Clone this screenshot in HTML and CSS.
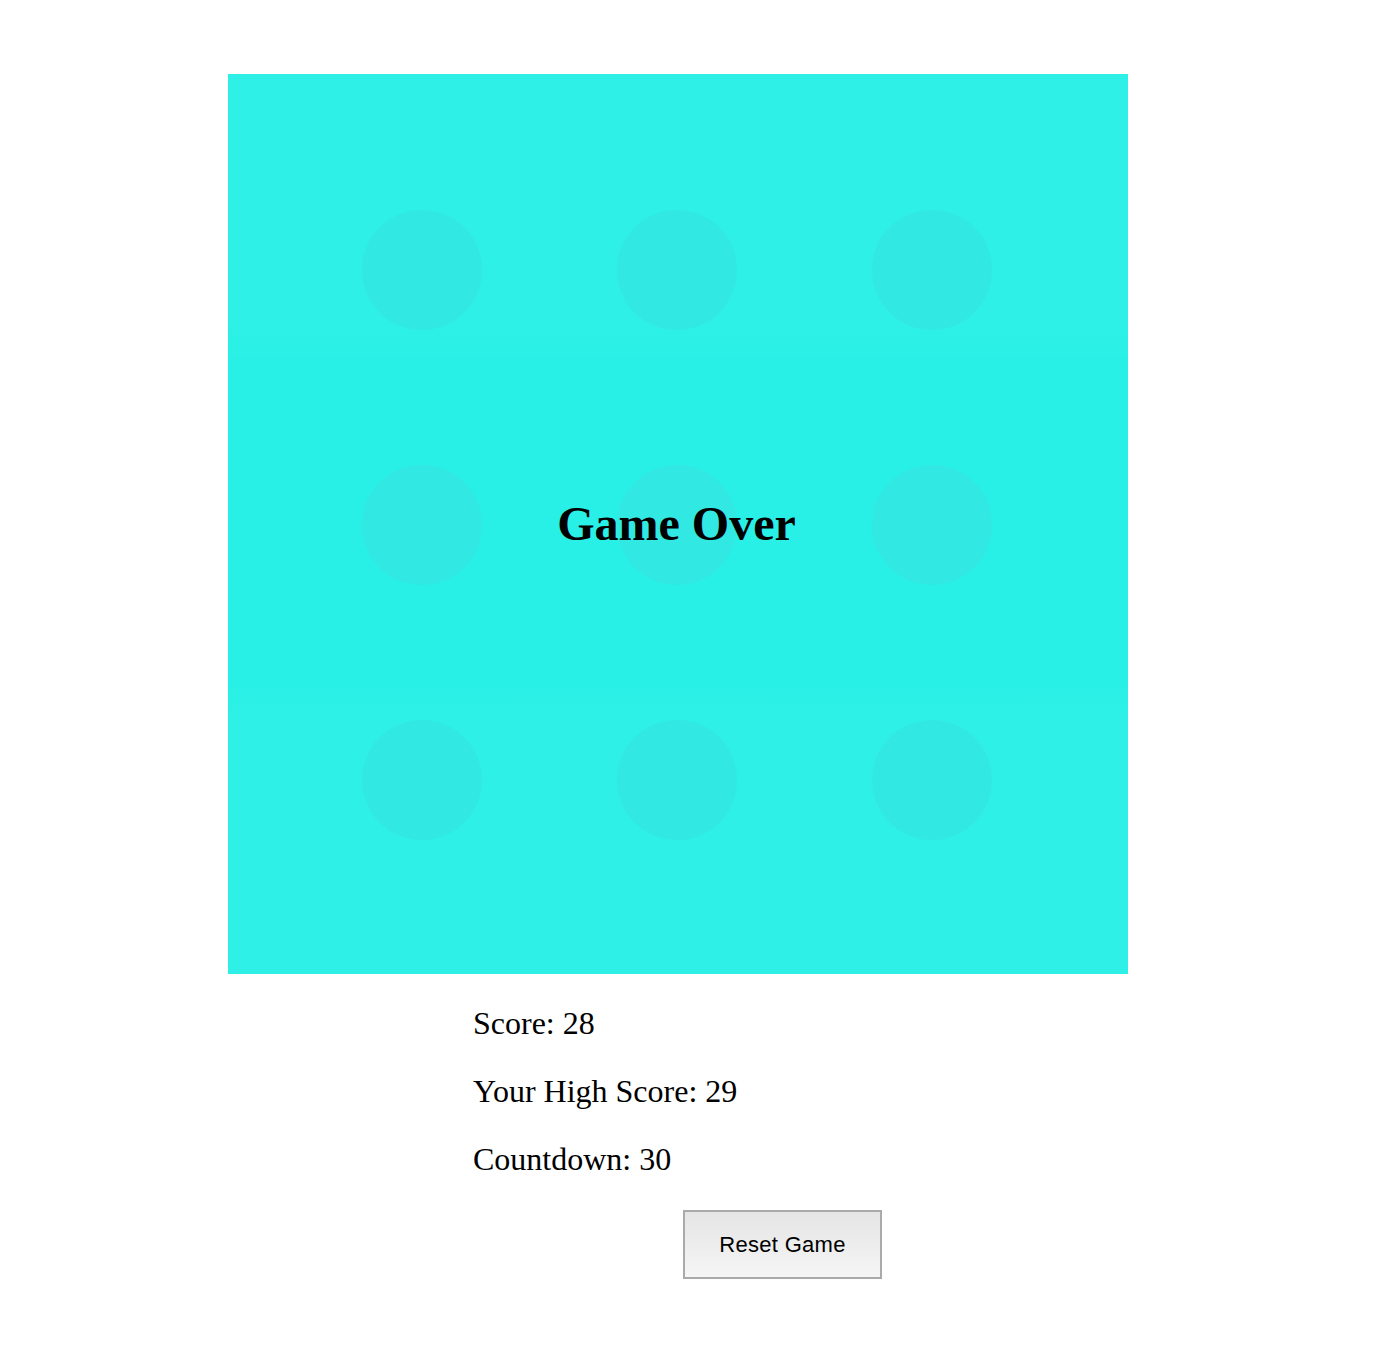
FILE: index.html
```html
<!DOCTYPE html>
<html>
<head>
<meta charset="utf-8">
<title>Whack Game</title>
<link rel="stylesheet" href="styles.css">
</head>
<body>
<div class="page">
  <div class="board">
    <div class="holes">
      <div class="hole"></div><div class="hole"></div><div class="hole"></div>
      <div class="hole"></div><div class="hole"></div><div class="hole"></div>
      <div class="hole"></div><div class="hole"></div><div class="hole"></div>
    </div>
    <div class="overlay"><h1 class="over">Game Over</h1></div>
  </div>
  <div class="stats">
    <p class="stat">Score: 28</p>
    <p class="stat">Your High Score: 29</p>
    <p class="stat">Countdown: 30</p>
  </div>
  <div class="actions">
    <button class="reset">Reset Game</button>
  </div>
</div>
</body>
</html>
```
FILE: styles.css
```css
html, body {
  margin: 0;
  padding: 0;
  background: #ffffff;
}
body {
  font-family: "Liberation Serif", "Times New Roman", serif;
  color: #000;
}
.page {
  padding-top: 74px;
}
.board {
  position: relative;
  width: 900px;
  height: 900px;
  margin-left: 228px;
  background: linear-gradient(to bottom,
    #2ef0e6 0%, #2ef0e6 27%, #28f0e6 33%, #28f0e6 67%, #2ef0e6 72%, #2ef0e6 100%);
}
.holes {
  display: grid;
  grid-template-columns: repeat(3, 120px);
  grid-auto-rows: 120px;
  column-gap: 135px;
  row-gap: 135px;
  padding: 136px 0 0 134px;
}
.hole {
  border-radius: 50%;
  background: #32e8e3;
}
.overlay {
  position: absolute;
  inset: 0;
  display: flex;
  align-items: center;
  justify-content: center;
  padding-right: 3px;
}
.over {
  margin: 0;
  font-size: 48px;
  font-weight: bold;
  line-height: 1;
  color: #000;
}
.stats {
  margin-left: 473px;
}
.stat {
  font-size: 32px;
  margin: 31px 0 31px 0;
}
.actions {
  margin-left: 683px;
}
.reset {
  width: 199px;
  height: 69px;
  margin-top: 1px;
  border: 2px solid #aaaaaa;
  background: linear-gradient(to bottom, #e5e5e5, #f5f5f5);
  font-family: "Liberation Sans", Arial, sans-serif;
  font-size: 22px;
  letter-spacing: 0.3px;
  color: #000;
  padding: 0;
  cursor: pointer;
}
```
